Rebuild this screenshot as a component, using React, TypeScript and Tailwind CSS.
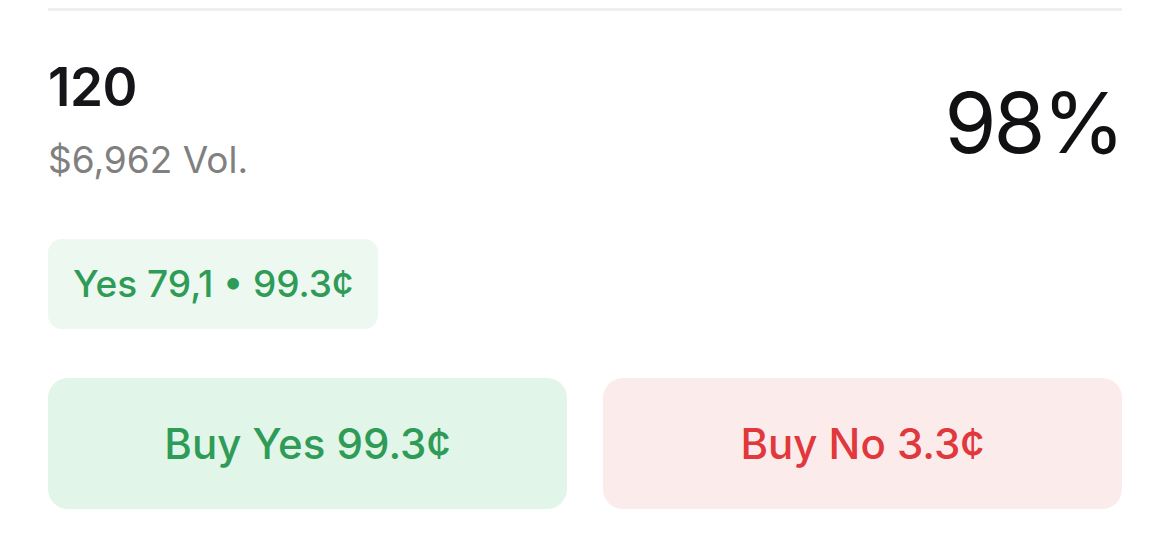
import React from 'react';

export default function App() {
  return (
    <div className="w-[1170px] h-[539px] bg-white pt-[8px] px-[48px]" style={{ fontFamily: 'Inter, "Noto Sans", sans-serif' }}>
      <div className="border-t-[3px] border-[#efefef]" />

      {/* Outcome header */}
      <div className="flex justify-between items-start mt-[50px]">
        <div className="flex flex-col">
          <span className="text-[53px] leading-[53px] font-semibold text-[#16161a] tracking-[-0.5px]">120</span>
          <span className="text-[37px] leading-[40px] text-[#808080] mt-[26px]">$6,962 Vol.</span>
        </div>
        <span className="text-[84px] leading-[84px] font-normal text-[#111113] mt-[20px] tracking-[-3px]">98%</span>
      </div>

      {/* Order book pill */}
      <div className="mt-[59px] inline-flex items-center h-[90px] px-[25px] rounded-[14px] bg-[#edf8f0] text-[#2e9c57] text-[37px] font-medium">
        Yes 79,1 • 99.3¢
      </div>

      {/* Buy buttons */}
      <div className="grid grid-cols-2 gap-[36px] mt-[49px]">
        <button className="h-[131px] rounded-[20px] bg-[#e1f5e8] text-[#2e9c57] text-[42px] font-medium">Buy Yes 99.3¢</button>
        <button className="h-[131px] rounded-[20px] bg-[#fcebeb] text-[#e0383c] text-[42px] font-medium">Buy No 3.3¢</button>
      </div>
    </div>
  );
}
